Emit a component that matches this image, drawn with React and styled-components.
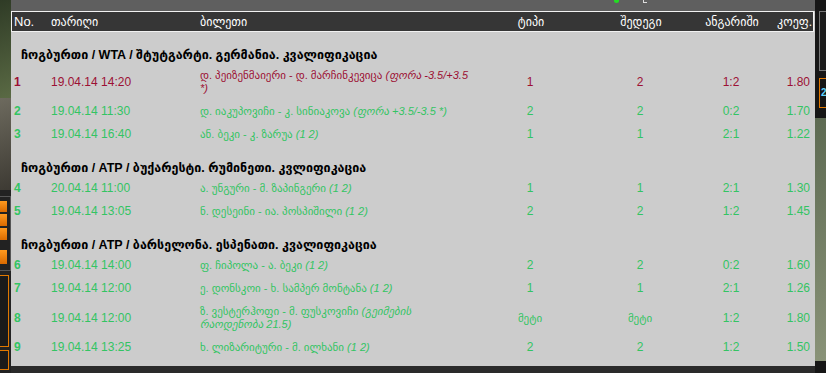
import React from "react";
import styled, { createGlobalStyle } from "styled-components";

const RED = "#9c1034";
const GREEN = "#33c463";

const groups = [
  {
    title: "ჩოგბურთი / WTA / შტუტგარტი. გერმანია. კვალიფიკაცია",
    rows: [
      { no: 1, date: "19.04.14 14:20", ticket: "დ. პეიზენმაიერი - დ. მარჩინკევიცა", note: "(ფორა -3.5/+3.5 *)", type: "1", result: "2", score: "1:2", coef: "1.80", lost: true },
      { no: 2, date: "19.04.14 11:30", ticket: "დ. იაკუპოვიჩი - კ. სინიაკოვა", note: "(ფორა +3.5/-3.5 *)", type: "2", result: "2", score: "0:2", coef: "1.70" },
      { no: 3, date: "19.04.14 16:40", ticket: "ან. ბეკი - კ. ზარუა", note: "(1 2)", type: "1", result: "1", score: "2:1", coef: "1.22" },
    ],
  },
  {
    title: "ჩოგბურთი / ATP / ბუქარესტი. რუმინეთი. კვლიფიკაცია",
    rows: [
      { no: 4, date: "20.04.14 11:00", ticket: "ა. უნგური - მ. ზაპინგერი", note: "(1 2)", type: "1", result: "1", score: "2:1", coef: "1.30" },
      { no: 5, date: "19.04.14 13:05", ticket: "ნ. დესეინი - ია. პოსპიშილი", note: "(1 2)", type: "2", result: "2", score: "1:2", coef: "1.45" },
    ],
  },
  {
    title: "ჩოგბურთი / ATP / ბარსელონა. ესპენათი. კვალიფიკაცია",
    rows: [
      { no: 6, date: "19.04.14 14:00", ticket: "ფ. ჩიპოლა - ა. ბეკი", note: "(1 2)", type: "2", result: "2", score: "0:2", coef: "1.60" },
      { no: 7, date: "19.04.14 12:00", ticket: "ე. დონსკოი - ხ. სამპერ მონტანა", note: "(1 2)", type: "1", result: "1", score: "2:1", coef: "1.26" },
      { no: 8, date: "19.04.14 12:00", ticket: "ზ. ვესტერჰოფი - მ. ფუსკოვიჩი", note: "(გეიმების რაოდენობა 21.5)", type: "მეტი", result: "მეტი", score: "1:2", coef: "1.80", small: true },
      { no: 9, date: "19.04.14 13:25", ticket: "ხ. ლიზარიტური - მ. ილხანი", note: "(1 2)", type: "2", result: "2", score: "1:2", coef: "1.50" },
    ],
  },
];

export default function App() {
  return (
    <>
      <GlobalStyle />
      <Page>
        <LeftStrip>
          <Photo $h={100} $c1="#2f3b26" $c2="#5a6a44" />
          <Photo $h={95} $c1="#6d6a5e" $c2="#3d3a33" />
          <Menu>
            <OrangeBtn $h={11} />
            <OrangeBtn $h={12} />
            <OrangeBtn $h={12} />
            <OrangeBtn $h={14} $mt={8} />
          </Menu>
          <OrangeBox $h={72} />
          <OrangeBox $h={18} />
        </LeftStrip>

        <Main>
          <TopBar>
            <Dot />
            <Tick />
          </TopBar>
          <HeadRow>
            <HeadCell>No.</HeadCell>
            <HeadCell $geo>თარიღი</HeadCell>
            <HeadCell $geo>ბილეთი</HeadCell>
            <HeadCell $geo $align="center">ტიპი</HeadCell>
            <HeadCell $geo $align="center">შედეგი</HeadCell>
            <HeadCell $geo $align="center">ანგარიში</HeadCell>
            <HeadCell $geo $align="right">კოეფ.</HeadCell>
          </HeadRow>
          <Body>
            {groups.map((g) => (
              <Group key={g.title}>
                <GroupTitle>{g.title}</GroupTitle>
                {g.rows.map((r) => (
                  <Row key={r.no} $color={r.lost ? RED : GREEN}>
                    <Cell $bold>{r.no}</Cell>
                    <Cell>{r.date}</Cell>
                    <Ticket>
                      {r.ticket} <Note>{r.note}</Note>
                    </Ticket>
                    <Cell $align="center" $small={r.small}>{r.type}</Cell>
                    <Cell $align="center" $small={r.small}>{r.result}</Cell>
                    <Cell $align="center">{r.score}</Cell>
                    <Cell $align="right">{r.coef}</Cell>
                  </Row>
                ))}
              </Group>
            ))}
          </Body>
          <Bottom />
        </Main>

        <RightStrip>
          <DarkBox />
          <OrangeTab>2</OrangeTab>
          <Photo $h={243} $c1="#5d6a52" $c2="#8a9378" />
        </RightStrip>
      </Page>
    </>
  );
}

const GlobalStyle = createGlobalStyle`
  html, body {
    margin: 0;
    padding: 0;
    background: #1c1c1c;
    overflow: hidden;
  }
`;

const Page = styled.div`
  display: flex;
  width: 826px;
  height: 373px;
  font-family: "Liberation Sans", "DejaVu Sans", sans-serif;
`;

const LeftStrip = styled.div`
  width: 11px;
  display: flex;
  flex-direction: column;
  background: #222;
`;

const Photo = styled.div`
  height: ${(p) => p.$h}px;
  background: linear-gradient(160deg, ${(p) => p.$c1}, ${(p) => p.$c2});
`;

const Menu = styled.div`
  display: flex;
  flex-direction: column;
  gap: 2px;
  margin: 6px 0 4px;
  padding: 4px 0 6px;
  border: 1px solid #555;
  border-left: none;
`;

const OrangeBtn = styled.div`
  height: ${(p) => p.$h}px;
  margin-top: ${(p) => p.$mt || 0}px;
  margin-right: 3px;
  background: linear-gradient(#ff9a1f, #d96a00);
`;

const OrangeBox = styled.div`
  height: ${(p) => p.$h}px;
  margin-bottom: 3px;
  margin-right: 2px;
  border: 1px solid #e07800;
  border-left: none;
  background: #1a1a1a;
`;

const Main = styled.div`
  width: 804px;
  display: flex;
  flex-direction: column;
  background: #cccccc;
`;

const TopBar = styled.div`
  height: 11px;
  background: #5f5f5f;
  position: relative;
`;

const Dot = styled.span`
  position: absolute;
  left: 603px;
  top: 0;
  width: 5px;
  height: 3px;
  border-radius: 0 0 3px 3px;
  background: #22dd22;
`;

const Tick = styled.span`
  position: absolute;
  left: 632px;
  top: 0;
  width: 3px;
  height: 2px;
  border-left: 1px solid #ddd;
  border-bottom: 1px solid #ddd;
`;

const cols = "37px 149px 283px 100px 120px 62px 51px";

const HeadRow = styled.div`
  display: grid;
  grid-template-columns: ${cols};
  height: 19px;
  align-items: center;
  background: #363636;
  border: 1px solid #f2f2f2;
  margin-right: 1px;
`;

const HeadCell = styled.div`
  color: #fff;
  font-size: ${(p) => (p.$geo ? "12px" : "13px")};
  text-align: ${(p) => p.$align || "left"};
  padding: 0 2px;
  white-space: nowrap;
`;

const Body = styled.div`
  flex: 1;
  padding-top: 1px;
`;

const Group = styled.div`
  display: flex;
  flex-direction: column;
`;

const GroupTitle = styled.div`
  padding: 16px 0 2px 10px;
  font-size: 12.5px;
  line-height: 13px;
  font-weight: bold;
  color: #000;
  white-space: nowrap;
`;

const Row = styled.div`
  display: grid;
  grid-template-columns: ${cols};
  align-items: center;
  padding: 5px 0;
  color: ${(p) => p.$color};
`;

const Cell = styled.div`
  font-size: ${(p) => (p.$small ? "11px" : "12px")};
  line-height: 13px;
  font-weight: ${(p) => (p.$bold ? "bold" : "normal")};
  text-align: ${(p) => p.$align || "left"};
  padding: 0 3px;
  white-space: nowrap;
`;

const Ticket = styled.div`
  font-size: 11px;
  line-height: 13px;
  padding: 0 3px;
`;

const Note = styled.i`
  font-size: 11px;
`;

const Bottom = styled.div`
  height: 7px;
  background: #2a2a2a;
`;

const RightStrip = styled.div`
  width: 11px;
  display: flex;
  flex-direction: column;
  background: #161616;
`;

const DarkBox = styled.div`
  height: 58px;
  margin: 11px 0 7px 4px;
  border: 1px solid #777;
  border-right: none;
  background: #1c1c1c;
`;

const OrangeTab = styled.div`
  height: 28px;
  margin: 0 0 10px 4px;
  border: 1px solid #e07800;
  border-right: none;
  color: #5fd3ff;
  font-size: 10px;
  font-weight: bold;
  line-height: 28px;
  padding-left: 1px;
`;
